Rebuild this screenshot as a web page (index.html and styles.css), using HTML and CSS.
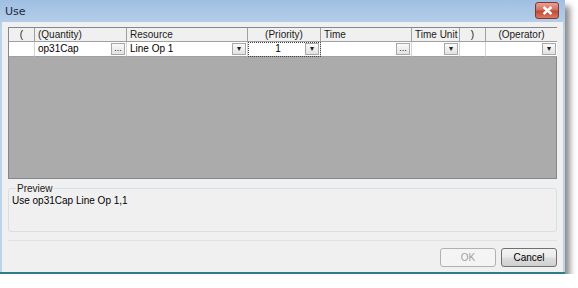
FILE: index.html
```html
<!DOCTYPE html>
<html lang="en">
<head>
    <meta charset="UTF-8">
    <title>Use</title>
    <link rel="stylesheet" href="styles.css">
</head>
<body>
    <div class="window">
        <div class="titlebar">
            <span class="title">Use</span>
            <div class="close-btn">
                <svg width="11" height="9" viewBox="0 0 11 9">
                    <path d="M1.5 1 L9.5 8 M9.5 1 L1.5 8" stroke="#fff" stroke-width="2.4"/>
                </svg>
            </div>
        </div>

        <div class="client">
            <div class="grid">
                <div class="head c-center">(</div>
                <div class="head">(Quantity)</div>
                <div class="head">Resource</div>
                <div class="head c-center">(Priority)</div>
                <div class="head">Time</div>
                <div class="head">Time Unit</div>
                <div class="head c-center">)</div>
                <div class="head c-center last">(Operator)</div>

                <div class="cell"></div>
                <div class="cell with-btn"><span>op31Cap</span><span class="cell-btn">...</span></div>
                <div class="cell with-btn"><span>Line Op 1</span><span class="cell-btn drop">&#9662;</span></div>
                <div class="cell with-btn focus"><span class="grow c-center">1</span><span class="cell-btn drop">&#9662;</span></div>
                <div class="cell with-btn"><span></span><span class="cell-btn">...</span></div>
                <div class="cell with-btn"><span></span><span class="cell-btn drop">&#9662;</span></div>
                <div class="cell"></div>
                <div class="cell with-btn last"><span></span><span class="cell-btn drop">&#9662;</span></div>

                <div class="empty"></div>
            </div>

            <fieldset class="preview">
                <legend>Preview</legend>
                <div class="preview-text">Use op31Cap Line Op 1,1</div>
            </fieldset>

            <div class="footer">
                <button class="btn" disabled>OK</button>
                <button class="btn">Cancel</button>
            </div>
        </div>
    </div>
</body>
</html>
```

FILE: styles.css
```css
body {
    margin: 0;
    background-color: #ffffff;
    font-family: 'Liberation Sans', Arial, sans-serif;
    font-size: 10px;
    color: #000;
}

.window {
    width: 565px;
    height: 274px;
    background: linear-gradient(#9fbfe2, #bcd3ec 30px);
    border-bottom: 2px solid #2d7d8a;
    box-shadow: 5px 6px 6px rgba(0, 0, 0, 0.45);
    display: flex;
    flex-direction: column;
    box-sizing: border-box;
}

.titlebar {
    height: 22px;
    display: flex;
    align-items: center;
    justify-content: space-between;
    padding: 0 6px 0 5px;
}

.title {
    font-family: 'DejaVu Sans', sans-serif;
    font-size: 11px;
    color: #1e2a3a;
    margin-top: 1px;
}

.close-btn {
    width: 22px;
    height: 15px;
    margin-top: -2px;
    border: 1px solid #7a3a30;
    border-radius: 3px;
    background: linear-gradient(#e8a194, #d3705f 45%, #c04a35 55%, #d87a60);
    display: flex;
    align-items: center;
    justify-content: center;
}

.client {
    flex: 1;
    margin: 0 2px 0 2px;
    background-color: #f0f0f0;
    padding: 5px 6px 0 6px;
    display: flex;
    flex-direction: column;
}

.grid {
    display: grid;
    grid-template-columns: 26px 92px 121px 73px 91px 48px 26px 71px;
    grid-template-rows: 14px 15px 1fr;
    height: 152px;
    border: 1px solid #828790;
    box-sizing: border-box;
    background-color: #ababab;
}

.head {
    background-color: #f0f0f0;
    border-right: 1px solid #a0a0a0;
    border-bottom: 1px solid #a0a0a0;
    padding: 0 3px;
    line-height: 13px;
    white-space: nowrap;
    overflow: hidden;
    color: #1a1a1a;
}

.cell {
    background-color: #ffffff;
    border-right: 1px solid #d4d4d4;
    border-bottom: 1px solid #a0a0a0;
    padding-left: 3px;
    line-height: 14px;
    display: flex;
    align-items: center;
    overflow: hidden;
    white-space: nowrap;
}

.last {
    border-right: none;
}

.c-center {
    text-align: center;
}

.with-btn {
    justify-content: space-between;
    padding-right: 1px;
}

.grow {
    flex: 1;
}

.focus {
    outline: 1px dotted #444;
    outline-offset: -1px;
}

.cell-btn {
    width: 14px;
    height: 12px;
    box-sizing: border-box;
    background: linear-gradient(#fafafa, #e2e2e2);
    border: 1px solid #a8a8a8;
    font-size: 9px;
    line-height: 8px;
    text-align: center;
    color: #222;
}

.cell-btn.drop {
    font-size: 8px;
    line-height: 10px;
}

.empty {
    grid-column: 1 / -1;
}

.preview {
    margin: 4px 0 0 0;
    padding: 0 3px;
    height: 49px;
    box-sizing: border-box;
    border: 1px solid #d5dfe5;
    border-radius: 3px;
}

.preview legend {
    padding: 0 1px;
    margin-left: 4px;
    color: #222;
}

.preview-text {
    margin-top: 1px;
}

.footer {
    margin-top: 8px;
    border-top: 1px solid #dfe3e8;
    flex: 1;
    display: flex;
    justify-content: flex-end;
    align-items: flex-start;
    padding-top: 7px;
    gap: 5px;
}

.btn {
    width: 56px;
    height: 19px;
    font-family: 'Liberation Sans', Arial, sans-serif;
    font-size: 10px;
    border: 1px solid #707070;
    border-radius: 3px;
    background: linear-gradient(#f2f2f2, #ebebeb 45%, #dddddd 55%, #cfcfcf);
    color: #000;
    padding: 0;
}

.btn:disabled {
    border-color: #adb2b5;
    background: #f4f4f4;
    color: #a0a0a0;
}
```
